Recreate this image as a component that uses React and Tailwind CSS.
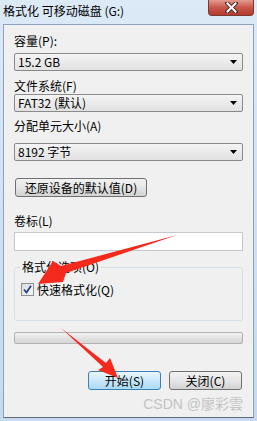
import React from "react";

const cjk = { fontFamily: '"Noto Sans CJK SC", "Noto Sans", sans-serif' };

function Combo({ value }) {
  return (
    <div className="flex h-[18px] w-[229px] items-center justify-between rounded-[2px] border border-[#8a8a8a] bg-gradient-to-b from-[#f4f4f4] to-[#e2e2e2] pl-[3px] pr-[5px] text-[12px] leading-none text-black">
      <span>{value}</span>
      <svg width="7" height="4" viewBox="0 0 7 4">
        <path d="M0 0H7L3.5 4Z" fill="#000" />
      </svg>
    </div>
  );
}

function Label({ children, className = "" }) {
  return (
    <div className={`h-[15px] text-[12px] leading-[15px] text-black ${className}`}>
      {children}
    </div>
  );
}

function Button({ children, primary, className = "" }) {
  return (
    <div
      className={`flex h-[19px] items-center justify-center rounded-[3px] border text-[12px] leading-none text-black ${
        primary
          ? "border-[#3c7fb1] bg-gradient-to-b from-[#eaf6fd] via-[#c9e8fb] to-[#a9daf6]"
          : "border-[#707070] bg-gradient-to-b from-[#f2f2f2] via-[#e6e6e6] to-[#d2d2d2]"
      } ${className}`}
    >
      {children}
    </div>
  );
}

export default function App() {
  return (
    <div
      className="relative h-[421px] w-[257px] overflow-hidden bg-gradient-to-b from-[#dce9f7] to-[#c6d9ef]"
      style={cjk}
    >
      {/* title bar */}
      <div className="flex h-[24px] items-start justify-between">
        <div className="pl-[3px] pt-[3px] text-[12px] leading-[15px] text-black">
          格式化 可移动磁盘 (G:)
        </div>
        <div className="mr-[3px] flex h-[16px] w-[46px] items-center justify-center rounded-b-[4px] border border-t-0 border-[#7a3a34] bg-gradient-to-b from-[#e29b8f] via-[#c9564a] to-[#b43a2e]">
          <svg width="13" height="11" viewBox="0 0 13 11">
            <path
              d="M2 1L6.5 5.5M11 1L6.5 5.5M6.5 5.5L2 10M6.5 5.5L11 10"
              stroke="#4a2a2a"
              strokeWidth="4"
              strokeLinecap="square"
            />
            <path
              d="M2.5 1.5L6.5 5.5M10.5 1.5L6.5 5.5M6.5 5.5L2.5 9.5M6.5 5.5L10.5 9.5"
              stroke="#fff"
              strokeWidth="2"
              strokeLinecap="square"
            />
          </svg>
        </div>
      </div>

      {/* client area */}
      <div className="relative ml-[3px] flex h-[394px] w-[251px] flex-col border border-[#8da2bc] border-b-[#5f6b7c] bg-[#f0f0f0] pl-[10px] pr-[10px]">
        <Label className="mt-[8px]">容量(P):</Label>
        <div className="mt-[5px]">
          <Combo value="15.2 GB" />
        </div>
        <Label className="mt-[7px]">文件系统(F)</Label>
        <div className="mt-[1px]">
          <Combo value="FAT32 (默认)" />
        </div>
        <Label className="mt-[6px]">分配单元大小(A)</Label>
        <div className="mt-[10px]">
          <Combo value="8192 字节" />
        </div>
        <Button className="ml-[1px] mt-[17px] w-[132px]">还原设备的默认值(D)</Button>
        <Label className="mt-[16px]">卷标(L)</Label>
        <div className="mt-[4px] h-[19px] w-[229px] border border-[#c5c7cc] bg-white" />

        {/* group box */}
        <div className="relative mt-[16px] h-[54px] w-[229px] rounded-[3px] border border-[#d5dfe5]">
          <span className="absolute left-[5px] top-[-9px] bg-[#f0f0f0] px-[2px] text-[12px] leading-[15px] text-black">
            格式化选项(O)
          </span>
          <div className="ml-[6px] mt-[14px] flex items-center gap-[3px]">
            <div className="flex h-[13px] w-[13px] items-center justify-center border border-[#8f8f8f] bg-gradient-to-br from-[#dcdcdc] to-[#f8f8f8]">
              <svg width="9" height="9" viewBox="0 0 9 9">
                <path d="M1 4.5L3.5 7.5L8 0.8" stroke="#2a3c8f" strokeWidth="1.8" fill="none" />
              </svg>
            </div>
            <span className="text-[12px] leading-[15px] text-black">快速格式化(Q)</span>
          </div>
        </div>

        {/* progress bar */}
        <div className="mt-[11px] h-[12px] w-[229px] rounded-[2px] border border-[#b2b2b2] bg-gradient-to-b from-[#f3f3f3] via-[#e2e2e2] to-[#d6d6d6]" />

        <div className="mt-[27px] flex w-[229px] justify-end gap-[8px] pr-[1px]">
          <Button primary className="w-[73px]">开始(S)</Button>
          <Button className="w-[73px]">关闭(C)</Button>
        </div>

        <div
          className="absolute bottom-[5px] right-[10px] text-[14px] leading-[16px] text-[#c3c3c3]"
          style={{ fontFamily: '"Liberation Sans", "Noto Sans CJK SC", sans-serif' }}
        >
          CSDN @廖彩雲
        </div>
      </div>

      {/* red annotation arrows */}
      <svg
        className="pointer-events-none absolute left-0 top-0"
        width="257"
        height="421"
        viewBox="0 0 257 421"
      >
        <polygon
          points="38,284 53,261 61,266 177,235 66,273 63,282"
          fill="#f52a1d"
        />
        <polygon
          points="61,328 106,363 110,358 118,378 98,370 103,367"
          fill="#f52a1d"
        />
      </svg>
    </div>
  );
}
